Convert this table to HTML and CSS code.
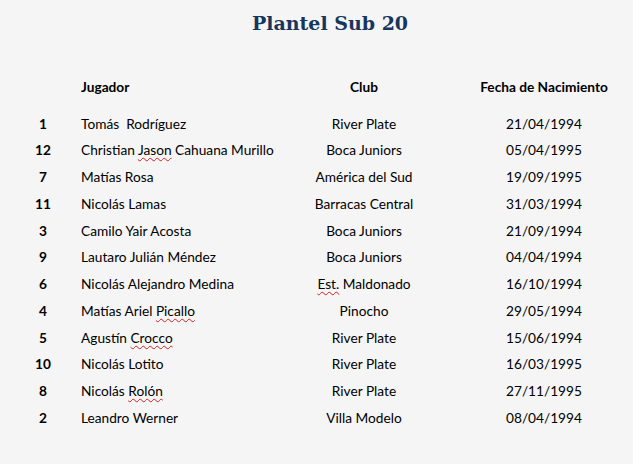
FILE: index.html
```html
<!DOCTYPE html>
<html lang="es">
<head>
<meta charset="utf-8">
<title>Plantel Sub 20</title>
<link rel="stylesheet" href="styles.css">
</head>
<body>
<div class="page">
  <h1 class="title">Plantel Sub 20</h1>
  <div class="table">
    <div class="row head">
      <div class="num"></div>
      <div class="name">Jugador</div>
      <div class="club">Club</div>
      <div class="date">Fecha de Nacimiento</div>
    </div>
    <div class="row"><div class="num">1</div><div class="name">Tomás&nbsp; Rodríguez</div><div class="club">River Plate</div><div class="date">21/04/1994</div></div>
    <div class="row"><div class="num">12</div><div class="name">Christian <span class="sp">Jason</span> Cahuana Murillo</div><div class="club">Boca Juniors</div><div class="date">05/04/1995</div></div>
    <div class="row"><div class="num">7</div><div class="name">Matías Rosa</div><div class="club">América del Sud</div><div class="date">19/09/1995</div></div>
    <div class="row"><div class="num">11</div><div class="name">Nicolás Lamas</div><div class="club">Barracas Central</div><div class="date">31/03/1994</div></div>
    <div class="row"><div class="num">3</div><div class="name">Camilo Yair Acosta</div><div class="club">Boca Juniors</div><div class="date">21/09/1994</div></div>
    <div class="row"><div class="num">9</div><div class="name">Lautaro Julián Méndez</div><div class="club">Boca Juniors</div><div class="date">04/04/1994</div></div>
    <div class="row"><div class="num">6</div><div class="name">Nicolás Alejandro Medina</div><div class="club"><span class="sp">Est.</span> Maldonado</div><div class="date">16/10/1994</div></div>
    <div class="row"><div class="num">4</div><div class="name">Matías Ariel <span class="sp">Picallo</span></div><div class="club">Pinocho</div><div class="date">29/05/1994</div></div>
    <div class="row"><div class="num">5</div><div class="name">Agustín <span class="sp">Crocco</span></div><div class="club">River Plate</div><div class="date">15/06/1994</div></div>
    <div class="row"><div class="num">10</div><div class="name">Nicolás Lotito</div><div class="club">River Plate</div><div class="date">16/03/1995</div></div>
    <div class="row"><div class="num">8</div><div class="name">Nicolás <span class="sp">Rolón</span></div><div class="club">River Plate</div><div class="date">27/11/1995</div></div>
    <div class="row"><div class="num">2</div><div class="name">Leandro Werner</div><div class="club">Villa Modelo</div><div class="date">08/04/1994</div></div>
  </div>
</div>
</body>
</html>
```

FILE: styles.css
```css
html, body {
  margin: 0;
  padding: 0;
  background: #f5f5f5;
}
body {
  width: 633px;
  height: 464px;
  overflow: hidden;
  font-family: Lato, "Liberation Sans", sans-serif;
  font-size: 13.7px;
  color: #000;
}
.page {
  padding-top: 9px;
}
.title {
  margin: 0;
  padding-left: 27px;
  text-align: center;
  font-family: "DejaVu Serif", serif;
  font-weight: bold;
  font-size: 19px;
  line-height: 28px;
  color: #17365d;
}
.table {
  margin-top: 36px;
  padding-left: 23px;
}
.row {
  display: grid;
  grid-template-columns: 40px 231px 140px 1fr;
  height: 26.75px;
  align-items: center;
}
.row.head {
  font-weight: bold;
  margin-bottom: 10px;
}
.num {
  text-align: center;
  font-weight: bold;
}
.name {
  padding-left: 18px;
  white-space: nowrap;
}
.club {
  text-align: center;
  white-space: nowrap;
}
.date {
  text-align: center;
  padding-left: 21px;
}
.sp {
  text-decoration: underline wavy #d02020;
  text-decoration-thickness: 1px;
  text-underline-offset: 2px;
}
```
